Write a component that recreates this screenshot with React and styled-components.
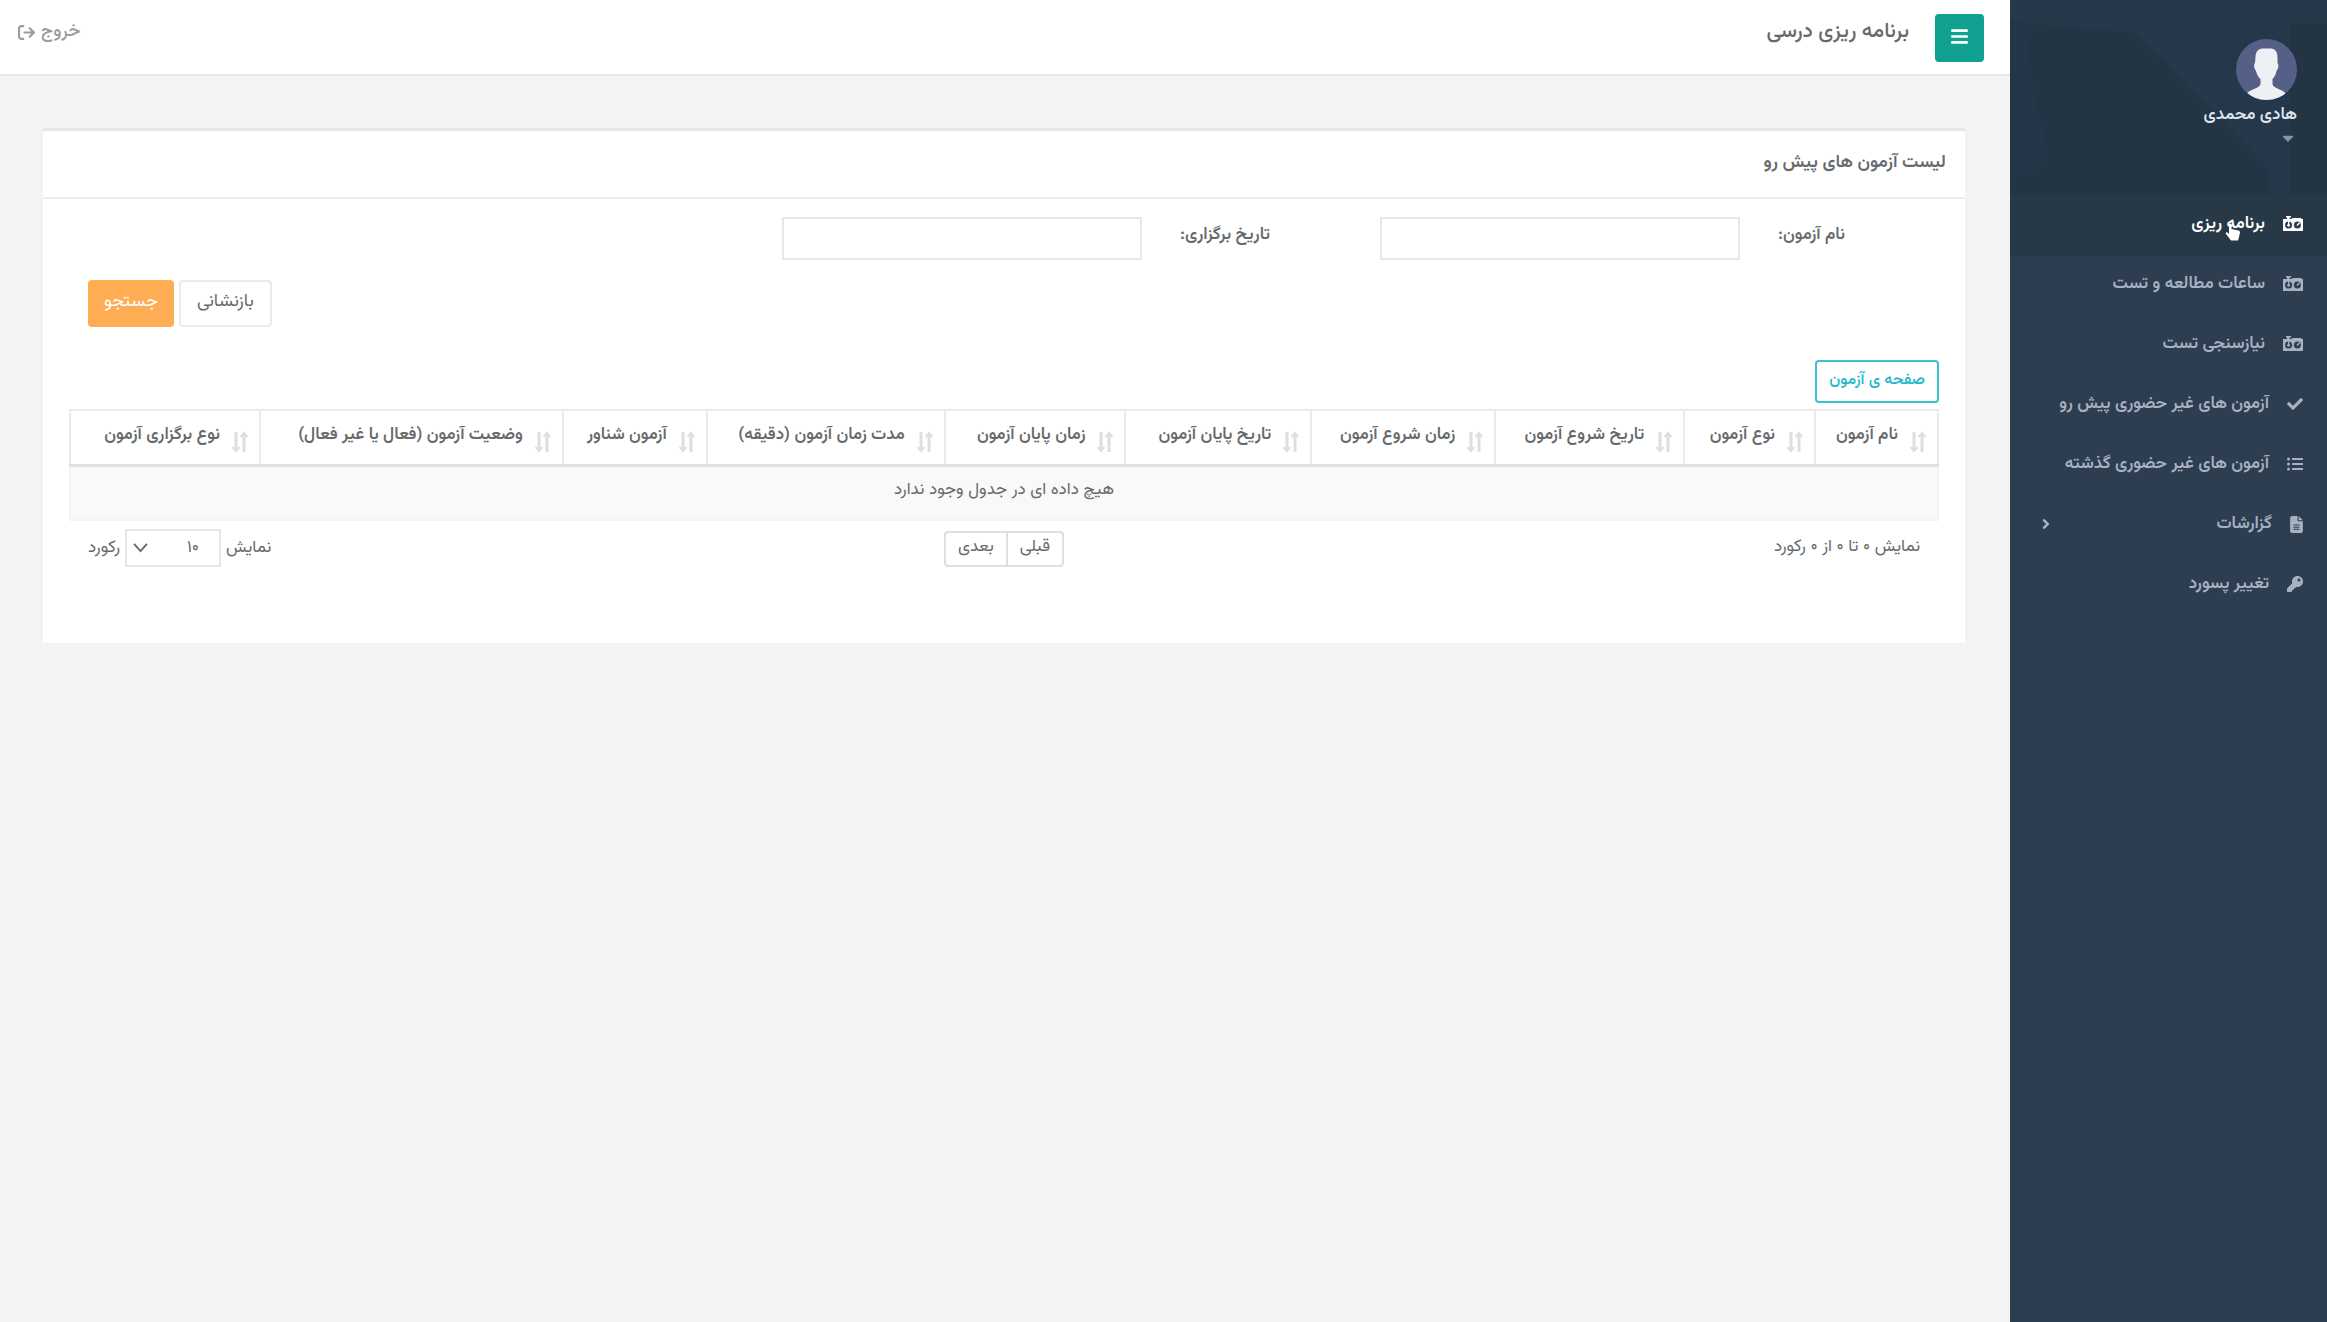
import { useState } from 'react';
import styled, { createGlobalStyle } from 'styled-components';
import { FaBars, FaCheck, FaKey, FaCaretDown, FaAngleRight, FaListUl } from 'react-icons/fa';
import { FaArrowRightFromBracket, FaFileLines } from 'react-icons/fa6';

const GlobalStyle = createGlobalStyle`
  * {
    box-sizing: border-box;
  }
  body {
    margin: 0;
    background: #f3f3f3;
    color: #676a6c;
    font-family: Vazirmatn, 'Noto Sans Arabic', 'DejaVu Sans', sans-serif;
    font-size: 17px;
    line-height: 24px;
  }
  button,
  input,
  select {
    font: inherit;
    color: inherit;
  }
  a {
    color: inherit;
    text-decoration: none;
  }
`;

const Wrapper = styled.div`
  display: flex;
  min-height: 100vh;
`;

const Sidebar = styled.nav`
  flex: none;
  width: 317px;
  background: #2d3e51;
  color: #a7b1c2;
`;

const Profile = styled.header`
  position: relative;
  height: 195px;
  padding: 39px 30px 0;
  background: #233445;
  overflow: hidden;
`;

const Pattern = styled.svg`
  position: absolute;
  inset: 0;
  width: 100%;
  height: 100%;
`;

const ProfileLink = styled.a`
  position: relative;
  display: flex;
  flex-direction: column;
  align-items: flex-start;
  color: #dfe4ed;
  font-weight: 600;

  .avatar {
    width: 61px;
    height: 61px;
    margin-bottom: 3px;
  }
  .caret {
    margin: 2px 0 0;
    color: #8095a8;
  }
`;

const Menu = styled.ul`
  list-style: none;
  margin: 0;
  padding: 0;
`;

const MenuLink = styled.a`
  position: relative;
  display: flex;
  align-items: center;
  gap: 18px;
  height: ${(p) => (p.$active ? '61px' : '60px')};
  padding: 0 24px 4px 28px;
  font-weight: 600;
  background: ${(p) => (p.$active ? '#273846' : 'transparent')};
  color: ${(p) => (p.$active ? '#fff' : 'inherit')};

  .arrow {
    margin-right: auto;
  }
`;

const Pointer = styled.svg`
  position: absolute;
  right: 86px;
  top: 28px;
  width: 16px;
  height: 18px;
`;

const FileIcon = styled(FaFileLines)`
  width: 13px;
  height: 17px;
`;

const Page = styled.main`
  flex: 1;
  min-width: 0;
`;

const TopBar = styled.header`
  display: flex;
  align-items: flex-start;
  height: 76px;
  padding: 14px 26px 0 18px;
  background: #fff;
  border-bottom: 2px solid #e7e7e7;
`;

const ToggleButton = styled.button`
  display: flex;
  align-items: center;
  justify-content: center;
  width: 49px;
  height: 48px;
  padding: 0 0 4px;
  background: #11a191;
  border: 0;
  border-radius: 4px;
  color: #fff;
  cursor: pointer;
`;

const PageTitle = styled.h1`
  margin: 6px 26px 0 0;
  font-size: 21px;
  line-height: 24px;
  font-weight: 500;
`;

const Logout = styled.a`
  display: flex;
  align-items: center;
  gap: 6px;
  margin: 6px auto 0 0;
  color: #999c9e;
  font-size: 18px;
  font-weight: 500;
`;

const Card = styled.section`
  margin: 52px 45px 0 43px;
  padding-bottom: 76px;
  background: #fff;
  border-top: 3px solid #e7e7e7;
`;

const CardTitle = styled.h2`
  margin: 0;
  padding: 20px 19px 22px;
  border-bottom: 2px solid #ebebeb;
  font-size: 18px;
  line-height: 24px;
  font-weight: 600;
`;

const Filters = styled.form`
  padding: 18px 25px 0 45px;
`;

const Fields = styled.div`
  display: grid;
  grid-template-columns: repeat(3, 1fr);
  column-gap: 38px;
  padding-left: 96px;
`;

const Field = styled.div`
  display: grid;
  grid-template-columns: 9fr 20fr;
  column-gap: 38px;

  label {
    padding-top: 6px;
    text-align: left;
    font-weight: 600;
  }
  input {
    width: 100%;
    height: 43px;
    padding: 4px 12px;
    border: 2px solid #e7e7e7;
    background: #fff;
  }
`;

const Actions = styled.div`
  display: flex;
  justify-content: flex-end;
  gap: 5px;
  padding-top: 20px;
`;

const ActionButton = styled.button`
  height: 47px;
  padding: ${(p) => (p.$primary ? '0 14px 4px' : '0 16px 4px')};
  border: 2px solid ${(p) => (p.$primary ? '#ffad55' : '#ebebeb')};
  border-radius: 4px;
  background: ${(p) => (p.$primary ? '#ffad55' : '#fff')};
  color: ${(p) => (p.$primary ? '#fff' : 'inherit')};
  font-size: 18px;
  cursor: pointer;
`;

const TableArea = styled.div`
  padding: 33px 26px 0;
`;

const ExamButton = styled.button`
  display: block;
  height: 43px;
  margin-bottom: 6px;
  padding: 0 12px 2px;
  border: 2px solid #3fc0cd;
  border-radius: 4px;
  background: #fff;
  color: #23b9c8;
  font-size: 16px;
  font-weight: 500;
  cursor: pointer;
`;

const Table = styled.table`
  width: 100%;
  border-collapse: collapse;
  table-layout: fixed;

  th {
    height: 55px;
    padding: 0;
    border: 2px solid #ebebeb;
    border-bottom: 3px solid #dfdfdf;
    font-weight: 600;
  }
  td {
    height: 55px;
    padding: 0 0 5px;
    border: 2px solid #f4f4f4;
    background: #f9f9f9;
    text-align: center;
  }
`;

const HeadCell = styled.div`
  display: flex;
  align-items: center;
  gap: 12px;
  padding: 0 11px 4px 0;

  span {
    white-space: nowrap;
  }
  svg {
    flex: none;
    width: 16px;
    height: 22px;
    margin-top: 13px;
  }
`;

const TableFooter = styled.div`
  display: grid;
  grid-template-columns: 1fr auto 1fr;
  padding: 8px 19px 0;
`;

const Info = styled.div`
  padding-top: 6px;
`;

const Pager = styled.div`
  display: flex;
  margin-top: 2px;

  button {
    height: 36px;
    padding: 0 12px 4px;
    border: 2px solid #dfdfdf;
    background: #fff;
    cursor: pointer;
  }
  button:first-child {
    border-radius: 0 4px 4px 0;
  }
  button:last-child {
    border-right: 0;
    border-radius: 4px 0 0 4px;
  }
`;

const PageSize = styled.label`
  display: flex;
  align-items: center;
  justify-self: end;
  gap: 5px;
`;

const SelectBox = styled.span`
  position: relative;

  select {
    display: block;
    width: 96px;
    height: 38px;
    padding: 0 20px 0 30px;
    appearance: none;
    border: 2px solid #e7e7e7;
    border-radius: 0;
    background: #fff;
  }
  svg {
    position: absolute;
    left: 8px;
    top: 13px;
    width: 15px;
    height: 11px;
    pointer-events: none;
  }
`;

const RadioIcon = () => (
  <svg width='20' height='16' viewBox='0 0 20 16' fill='currentColor'>
    <path d='M3 0h5v1.500H6.500V3H8c1-.8 2-1 3-1h6c1 0 1.500.5 2 1h1v12H0V3h4V1.500H3z' fillRule='evenodd' />
    <g fill='#2d3e51'>
      <circle cx='5.600' cy='9' r='3.500' />
      <circle cx='14.400' cy='9' r='3.500' />
    </g>
    <path d='M5 4.500h1.300V9H5z' />
    <circle cx='5.600' cy='9.300' r='1.400' />
    <path d='M13.500 9l2.600-2.700 1 1-2.700 2.700z' />
  </svg>
);

const SortIcon = () => (
  <svg viewBox='0 0 16 22' fill='none' stroke='#dedede' strokeWidth='3' aria-hidden='true'>
    <path d='M12 21V4M4 1v17' />
    <path d='M8.500 6 12 2l3.500 4M.500 16 4 20l3.500-4' strokeWidth='2' />
  </svg>
);

const Avatar = () => (
  <svg className='avatar' viewBox='0 0 61 61' aria-hidden='true'>
    <clipPath id='avatar'>
      <circle cx='30.5' cy='30.5' r='30.5' />
    </clipPath>
    <g clipPath='url(#avatar)'>
      <path fill='#565f86' d='M0 0h61v61H0z' />
      <path
        fill='#eef1f4'
        d='M19.500 18c0-6 3.500-8.500 8-8.500h6.500c4.500 0 7.500 2.500 7.500 8.500v6c1.500 1 1 6-1 8-.8 4-2.500 6.500-4 8v5c0 4 9 5 13 9v8H11v-8c4-4 13.500-5 13.500-9v-5c-2-1.500-3.500-4-4.500-8-2-2-2.500-7-1-8z'
      />
    </g>
  </svg>
);

const menu = [
  { text: 'برنامه ریزی', icon: <RadioIcon />, active: true },
  { text: 'ساعات مطالعه و تست', icon: <RadioIcon /> },
  { text: 'نیازسنجی تست', icon: <RadioIcon /> },
  { text: 'آزمون های غیر حضوری پیش رو', icon: <FaCheck size={16} /> },
  { text: 'آزمون های غیر حضوری گذشته', icon: <FaListUl size={16} /> },
  { text: 'گزارشات', icon: <FileIcon />, sub: true },
  { text: 'تغییر پسورد', icon: <FaKey size={16} /> },
];

// widths are shares of the whole table
const columns = [
  { text: 'نام آزمون', width: 123 },
  { text: 'نوع آزمون', width: 131 },
  { text: 'تاریخ شروع آزمون', width: 189 },
  { text: 'زمان شروع آزمون', width: 184 },
  { text: 'تاریخ پایان آزمون', width: 186 },
  { text: 'زمان پایان آزمون', width: 181 },
  { text: 'مدت زمان آزمون (دقیقه)', width: 238 },
  { text: 'آزمون شناور', width: 144 },
  { text: 'وضعیت آزمون (فعال یا غیر فعال)', width: 303 },
  { text: 'نوع برگزاری آزمون', width: 190 },
];
const total = columns.reduce((sum, c) => sum + c.width, 0);

const App = () => {
  const [open, setOpen] = useState(true);

  return (
    <Wrapper dir='rtl' lang='fa'>
      <GlobalStyle />
      {open && (
        <Sidebar>
          <Profile>
            <Pattern viewBox='0 0 317 195' preserveAspectRatio='none' aria-hidden='true'>
              <path fill='#26394a' d='M0 0h317v24H280l-20 136L125 33 0 22z' />
              <path fill='#24374b' d='M125 33 200 48 280 24v171h-22v-28z' />
              <path fill='#24364a' d='M0 24h14l10 70 14 60-16 20H0z' />
            </Pattern>
            <ProfileLink href='#profile'>
              <Avatar />
              <span>هادی محمدی</span>
              <FaCaretDown className='caret' size={18} />
            </ProfileLink>
          </Profile>
          <Menu>
            {menu.map(({ text, icon, active, sub }) => (
              <li key={text}>
                <MenuLink href='#menu' $active={active}>
                  {icon}
                  <span>{text}</span>
                  {sub && <FaAngleRight className='arrow' size={16} />}
                  {active && (
                    <Pointer viewBox='0 0 16 18' fill='#fff' aria-hidden='true'>
                      <path d='M4 1.500C4 .3 6.500.3 6.500 1.500V6l7 1.500c1 .3 1.500 1 1.500 2L14 14l-1 3.500H6L1 11c-.8-1.200.5-2.200 1.500-1.500L4 11z' />
                    </Pointer>
                  )}
                </MenuLink>
              </li>
            ))}
          </Menu>
        </Sidebar>
      )}
      <Page>
        <TopBar>
          <ToggleButton type='button' aria-label='منو' onClick={() => setOpen(!open)}>
            <FaBars size={19} />
          </ToggleButton>
          <PageTitle>برنامه ریزی درسی</PageTitle>
          <Logout href='#logout'>
            <span>خروج</span>
            <FaArrowRightFromBracket size={17} />
          </Logout>
        </TopBar>
        <Card>
          <CardTitle>لیست آزمون های پیش رو</CardTitle>
          <Filters onSubmit={(e) => e.preventDefault()}>
            <Fields>
              <Field>
                <label htmlFor='name'>نام آزمون:</label>
                <input id='name' type='text' />
              </Field>
              <Field>
                <label htmlFor='date'>تاریخ برگزاری:</label>
                <input id='date' type='text' />
              </Field>
            </Fields>
            <Actions>
              <ActionButton type='reset'>بازنشانی</ActionButton>
              <ActionButton type='submit' $primary>
                جستجو
              </ActionButton>
            </Actions>
          </Filters>
          <TableArea>
            <ExamButton type='button'>صفحه ی آزمون</ExamButton>
            <Table>
              <colgroup>
                {columns.map(({ text, width }) => (
                  <col key={text} style={{ width: `${(width / total) * 100}%` }} />
                ))}
              </colgroup>
              <thead>
                <tr>
                  {columns.map(({ text }) => (
                    <th key={text} scope='col'>
                      <HeadCell>
                        <SortIcon />
                        <span>{text}</span>
                      </HeadCell>
                    </th>
                  ))}
                </tr>
              </thead>
              <tbody>
                <tr>
                  <td colSpan={columns.length}>هیچ داده ای در جدول وجود ندارد</td>
                </tr>
              </tbody>
            </Table>
            <TableFooter>
              <Info>نمایش ۰ تا ۰ از ۰ رکورد</Info>
              <Pager>
                <button type='button'>قبلی</button>
                <button type='button'>بعدی</button>
              </Pager>
              <PageSize>
                نمایش
                <SelectBox>
                  <select defaultValue='10'>
                    <option value='10'>۱۰</option>
                    <option value='25'>۲۵</option>
                    <option value='50'>۵۰</option>
                  </select>
                  <svg viewBox='0 0 16 12' fill='none' stroke='#666' strokeWidth='2' aria-hidden='true'>
                    <path d='M1 2l7 8 7-8' />
                  </svg>
                </SelectBox>
                رکورد
              </PageSize>
            </TableFooter>
          </TableArea>
        </Card>
      </Page>
    </Wrapper>
  );
};

export default App;
